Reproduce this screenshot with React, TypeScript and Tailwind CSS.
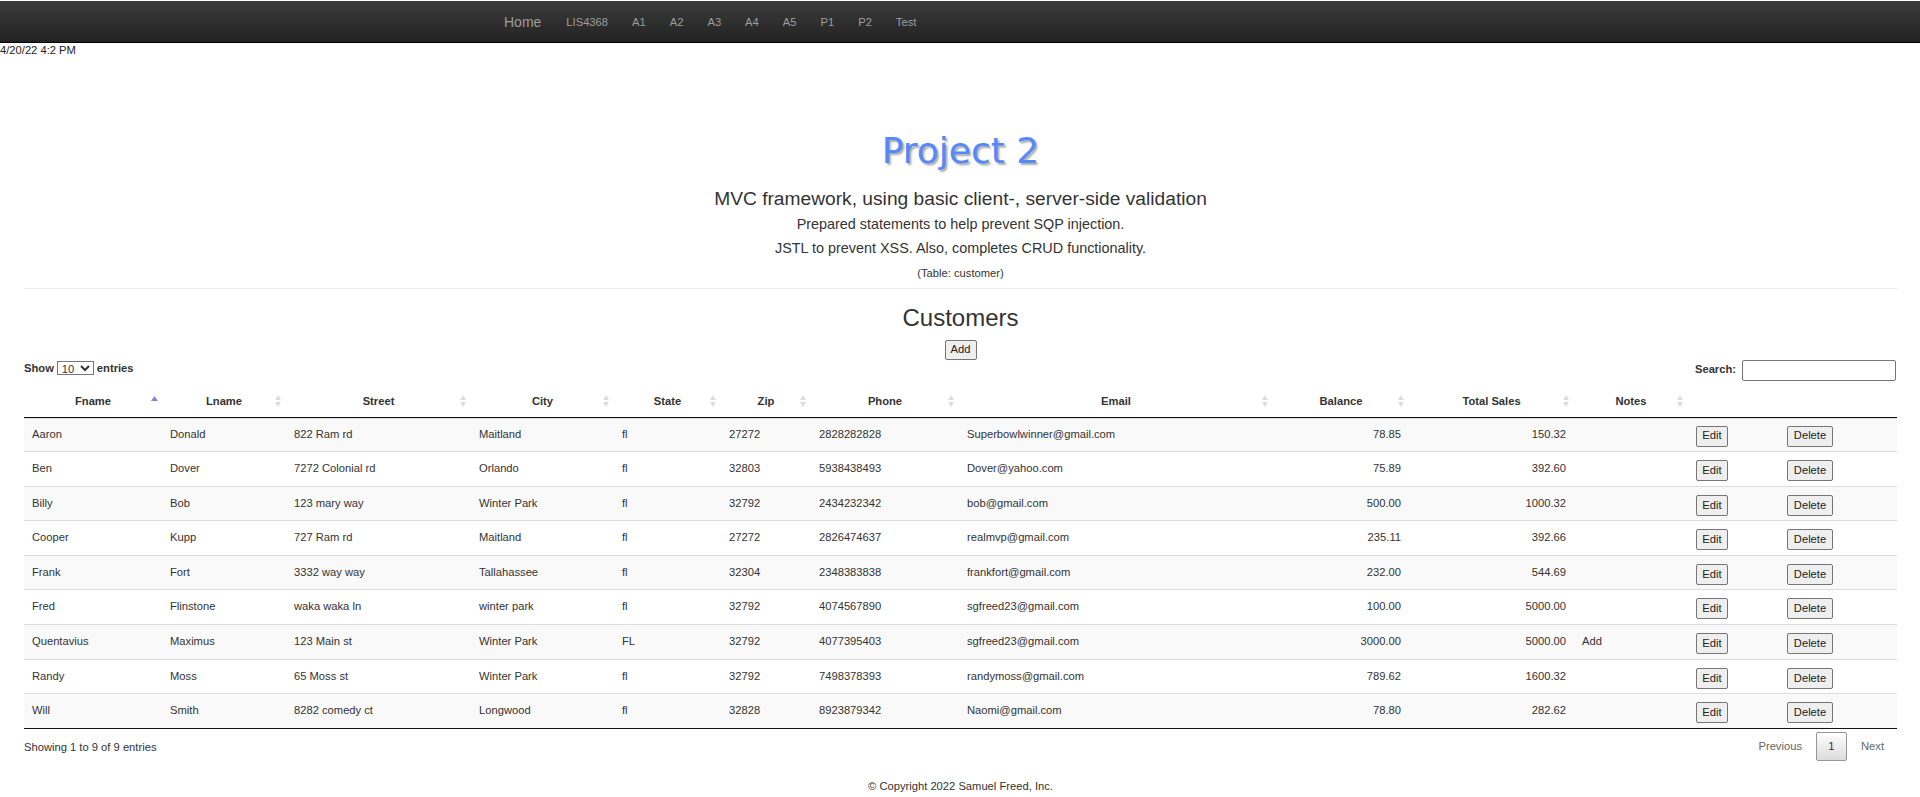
const rows = [
  ["Aaron","Donald","822 Ram rd","Maitland","fl","27272","2828282828","Superbowlwinner@gmail.com","78.85","150.32",""],
  ["Ben","Dover","7272 Colonial rd","Orlando","fl","32803","5938438493","Dover@yahoo.com","75.89","392.60",""],
  ["Billy","Bob","123 mary way","Winter Park","fl","32792","2434232342","bob@gmail.com","500.00","1000.32",""],
  ["Cooper","Kupp","727 Ram rd","Maitland","fl","27272","2826474637","realmvp@gmail.com","235.11","392.66",""],
  ["Frank","Fort","3332 way way","Tallahassee","fl","32304","2348383838","frankfort@gmail.com","232.00","544.69",""],
  ["Fred","Flinstone","waka waka ln","winter park","fl","32792","4074567890","sgfreed23@gmail.com","100.00","5000.00",""],
  ["Quentavius","Maximus","123 Main st","Winter Park","FL","32792","4077395403","sgfreed23@gmail.com","3000.00","5000.00","Add"],
  ["Randy","Moss","65 Moss st","Winter Park","fl","32792","7498378393","randymoss@gmail.com","789.62","1600.32",""],
  ["Will","Smith","8282 comedy ct","Longwood","fl","32828","8923879342","Naomi@gmail.com","78.80","282.62",""],
];
const cols: [string, string][] = [
  ["Fname","w-[138px]"],["Lname","w-[124px]"],["Street","w-[185px]"],["City","w-[143px]"],["State","w-[107px]"],["Zip","w-[90px]"],["Phone","w-[148px]"],["Email","w-[314px]"],["Balance","w-[136px]"],["Total Sales","w-[165px]"],["Notes","w-[114px]"],
];
const nav = ["LIS4368","A1","A2","A3","A4","A5","P1","P2","Test"];

function SortIcon({ active }: { active?: boolean }) {
  if (active) {
    return (
      <svg className="absolute right-[4px] top-[15px] w-[7px] h-[5px]" viewBox="0 0 7 5">
        <path d="M3.5 0L7 5H0z" fill="#8585d6" />
      </svg>
    );
  }
  return (
    <svg className="absolute right-[5px] top-[14px] w-[6px] h-[12px]" viewBox="0 0 6 12">
      <path d="M3 0L6 5H0z" fill="#dcdcdc" />
      <path d="M3 12L0 7H6z" fill="#dcdcdc" />
    </svg>
  );
}

function Btn({ children, className = "" }: { children: string; className?: string }) {
  return (
    <button className={"h-[21px] border border-[#767676] rounded-[2px] bg-[#efefef] text-[11.2px] text-[#222] leading-none " + className}>
      {children}
    </button>
  );
}

export default function App() {
  return (
    <div className="bg-white text-[#333] text-[11.2px] font-['Liberation_Sans',Arial,sans-serif] h-[797px] overflow-hidden">
      <div className="mt-px h-[42px] border-b border-black bg-gradient-to-b from-[#3c3c3c] to-[#222] flex items-center pl-[504px] pt-[1px] text-[#9d9d9d]">
        <span className="text-[14px] mr-[25px]">Home</span>
        <div className="flex gap-[24px]">
          {nav.map((n) => (
            <span key={n}>{n}</span>
          ))}
        </div>
      </div>
      <div className="h-[14px] leading-[14px] text-[#222]">4/20/22 4:2 PM</div>

      <div className="mx-[24px] w-[1873px] text-center">
        <h1 className="mt-[69px] h-[50px] leading-[50px] text-[36px] text-[#5588ff] font-['DejaVu_Sans',sans-serif] [text-shadow:2px_2px_2px_#aaa]">
          Project 2
        </h1>
        <div className="mt-[11px] h-[24px] leading-[24px] text-[19.2px]">MVC framework, using basic client-, server-side validation</div>
        <div className="mt-[3px] h-[20px] leading-[20px] text-[14.4px]">Prepared statements to help prevent SQP injection.</div>
        <div className="mt-[4px] h-[20px] leading-[20px] text-[14.4px]">JSTL to prevent XSS. Also, completes CRUD functionality.</div>
        <div className="mt-[7px] h-[16px] leading-[16px]">(Table: customer)</div>
        <div className="mt-[7px] h-px bg-[#eeeeee]" />
        <h2 className="mt-[14px] h-[30px] leading-[30px] text-[24px]">Customers</h2>
        <div className="mt-[7px] h-[20px] flex justify-center">
          <Btn className="w-[32px] !h-[20px]">Add</Btn>
        </div>

        <div className="h-[21px] flex justify-between items-center font-bold text-[#333]">
          <div className="flex items-center pb-[5px]">
            Show
            <select className="mx-[3px] w-[37px] h-[14px] border border-[#767676] bg-white text-[11.2px] font-normal leading-none">
              <option>10</option>
            </select>
            entries
          </div>
          <div className="flex items-center mr-[1px]">
            <span className="pb-[2px]">Search:</span>
            <input className="ml-[6px] w-[154px] h-[21px] border border-[#767676] rounded-[2px] bg-white" />
          </div>
        </div>

        <table className="w-[1873px] table-fixed border-collapse text-left">
          <thead>
            <tr>
              {cols.map(([c, w], i) => (
                <th key={c} className={"relative h-[36px] pt-[5px] border-b border-[#111] text-center font-bold text-[#333] " + w}>
                  {c}
                  <SortIcon active={i === 0} />
                </th>
              ))}
              <th className="w-[91px] h-[36px] border-b border-[#111]" />
              <th className="h-[36px] border-b border-[#111]" />
            </tr>
          </thead>
          <tbody>
            {rows.map((r, i) => {
              const inset = i === 0 ? "shadow-[inset_0_1px_0_#dddddd] " : "";
              return (
                <tr key={r[0]} className={(i % 2 === 0 ? "bg-[#f9f9f9] " : "bg-white ") + (i === rows.length - 1 ? "border-b border-[#111]" : "border-b border-[#dddddd]")}>
                  {r.map((v, j) => (
                    <td key={j} className={inset + "h-[34.6px] align-top px-[8px] pt-[8px] leading-[16px] " + (j === 8 || j === 9 ? "text-right" : "")}>
                      {v}
                    </td>
                  ))}
                  <td className={inset + "align-top px-[8px] pt-[8px]"}>
                    <Btn className="w-[32px] block">Edit</Btn>
                  </td>
                  <td className={inset + "align-top px-[8px] pt-[8px]"}>
                    <Btn className="w-[46px] block">Delete</Btn>
                  </td>
                </tr>
              );
            })}
          </tbody>
        </table>

        <div className="flex justify-between text-left">
          <div className="pt-[10px] leading-[16px]">Showing 1 to 9 of 9 entries</div>
          <div className="pt-[3px] flex items-center text-[#666] mr-[13px]">
            <span>Previous</span>
            <span className="ml-[14px] w-[31px] h-[29px] flex items-center justify-center border border-[#979797] rounded-[2px] bg-gradient-to-b from-white to-[#dcdcdc] text-[#333]">1</span>
            <span className="ml-[14px]">Next</span>
          </div>
        </div>
        <div className="mt-[17px] h-[16px] leading-[16px]">© Copyright 2022 Samuel Freed, Inc.</div>
      </div>
    </div>
  );
}
